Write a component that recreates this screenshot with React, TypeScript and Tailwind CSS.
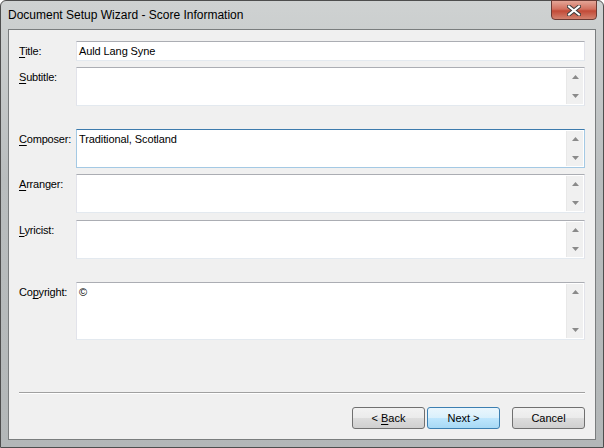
import React from 'react';

// Win7 style text box with optional vertical scroll buttons
const FieldBox: React.FC<{ h: string; value?: string; multi?: boolean; focused?: boolean }> = ({ h, value, multi, focused }) => (
  <div
    className={`flex flex-1 bg-white border ${h} ${
      focused ? 'border-[#a4c9e4] border-t-[#3d7bad]' : 'border-[#e2e3ea] border-t-[#abadb3] border-b-[#e3e9ef]'
    }`}
  >
    <div className="flex-1 pl-[2px] pt-[1px] text-[11px] leading-[16px] tracking-[-0.1px] text-black">{value}</div>
    {multi && (
      <div className="w-[17px] flex flex-col justify-between items-center bg-[#f0f0f0] border-l border-[#e8e8e8] py-[6px] my-[1px] mr-[1px]">
        <svg width="7" height="4" viewBox="0 0 7 4"><path d="M3.5 0L7 4H0z" fill="#8a8a8a" /></svg>
        <svg width="7" height="4" viewBox="0 0 7 4"><path d="M0 0H7L3.5 4z" fill="#8a8a8a" /></svg>
      </div>
    )}
  </div>
);

const Field: React.FC<{
  label: string;
  ul: number;
  h: string;
  mt: string;
  value?: string;
  multi?: boolean;
  focused?: boolean;
}> = ({ label, ul, h, mt, value, multi, focused }) => (
  <div className={`flex ${mt}`}>
    <div className="w-[57px] pt-[3px] text-[11px] leading-[14px] tracking-[-0.2px] text-black whitespace-nowrap">
      {label.slice(0, ul)}
      <span className="underline underline-offset-2">{label[ul]}</span>
      {label.slice(ul + 1)}
    </div>
    <FieldBox h={h} value={value} multi={multi} focused={focused} />
  </div>
);

const WinButton: React.FC<{ children: React.ReactNode; primary?: boolean; className?: string }> = ({ children, primary, className }) => (
  <div
    className={`h-[22px] flex items-center justify-center rounded-[3px] border text-[11px] text-black ${className} ${
      primary
        ? 'border-[#3c7fb1] bg-[linear-gradient(to_bottom,#eaf6fd_0%,#d9f0fc_50%,#bee6fd_51%,#a7d9f5_100%)]'
        : 'border-[#707070] bg-[linear-gradient(to_bottom,#f2f2f2_0%,#ebebeb_50%,#dddddd_51%,#cfcfcf_100%)]'
    }`}
  >
    {children}
  </div>
);

export default function App() {
  return (
    <div
      className="w-[604px] h-[448px] flex flex-col border border-[#4e4e4e] rounded-t-[6px] bg-[linear-gradient(to_bottom,#cfd2d2,#b9bdbe_40%,#b3b7b8)]"
      style={{ fontFamily: '"Liberation Sans", Arial, sans-serif' }}
    >
      {/* title bar */}
      <div className="h-[28px] flex items-start justify-between">
        <div className="pl-[7px] pt-[6px] text-[12px] leading-[16px] text-black">
          Document Setup Wizard - Score Information
        </div>
        <div className="mr-[6px] mt-[-1px] w-[46px] h-[20px] flex items-center justify-center rounded-b-[4px] border border-[#6b3a34] bg-[linear-gradient(to_bottom,#e4a597,#d2705f_45%,#c24a37_55%,#d3826f)]">
          <svg width="14" height="11" viewBox="0 0 14 11">
            <path d="M2 1.5L12 9.5M12 1.5L2 9.5" stroke="#3b3b3b" strokeWidth="4" strokeLinecap="square" />
            <path d="M2 1.5L12 9.5M12 1.5L2 9.5" stroke="#ffffff" strokeWidth="2" strokeLinecap="square" />
          </svg>
        </div>
      </div>

      {/* client area */}
      <div className="flex-1 mx-[7px] mb-[7px] border border-[#7a7d7e] bg-[#f0f0f0] flex flex-col pl-[10px] pr-[10px] pt-[11px]">
        <Field label="Title:" ul={0} h="h-[20px]" mt="mt-0" value="Auld Lang Syne" />
        <Field label="Subtitle:" ul={0} h="h-[39px]" mt="mt-[6px]" multi />
        <Field label="Composer:" ul={0} h="h-[39px]" mt="mt-[23px]" value="Traditional, Scotland" multi focused />
        <Field label="Arranger:" ul={0} h="h-[39px]" mt="mt-[6px]" multi />
        <Field label="Lyricist:" ul={0} h="h-[39px]" mt="mt-[7px]" multi />
        <Field label="Copyright:" ul={2} h="h-[58px]" mt="mt-[23px]" value="©" multi />

        <div className="mt-[52px] h-[2px] border-t border-[#a0a0a0] border-b border-b-white" />

        <div className="mt-[13px] flex justify-end">
          <WinButton className="w-[73px]">
            &lt;&nbsp;<span className="underline underline-offset-2">B</span>ack
          </WinButton>
          <WinButton primary className="w-[73px] ml-[2px]">
            Next &gt;
          </WinButton>
          <WinButton className="w-[73px] ml-[12px]">Cancel</WinButton>
        </div>
      </div>
    </div>
  );
}
